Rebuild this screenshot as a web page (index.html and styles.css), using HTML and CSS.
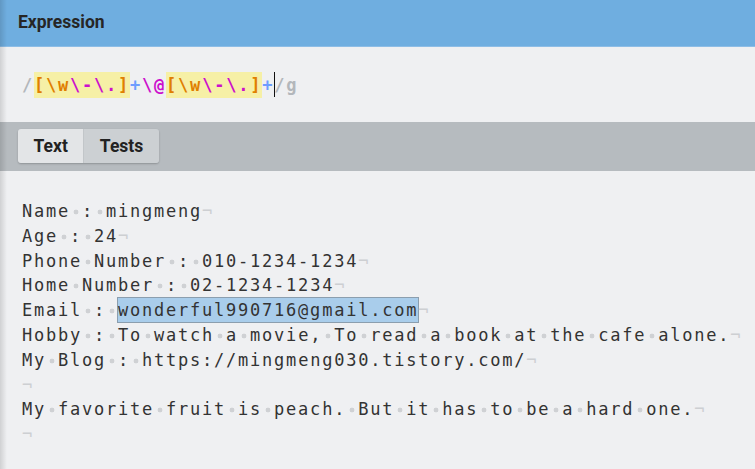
FILE: index.html
```html
<!DOCTYPE html>
<html>
<head>
<meta charset="utf-8">
<link rel="stylesheet" href="styles.css">
</head>
<body>
<div class="app">
  <header class="hdr">Expression</header>
  <section class="expr">
    <div class="rx"><span class="sl">/</span><span class="set"><span class="or">[\w</span><span class="mg">\-\.</span><span class="or">]</span></span><span class="bl">+</span><span class="mg">\@</span><span class="set"><span class="or">[\w</span><span class="mg">\-\.</span><span class="or">]</span></span><span class="bl">+</span><span class="caret"></span><span class="sl">/g</span></div>
  </section>
  <nav class="bar">
    <div class="tabs"><span class="tab on">Text</span><span class="tab">Tests</span></div>
  </nav>
  <section class="text">
    <div class="ln">Name<i class="s"></i>:<i class="s"></i>mingmeng</div>
    <div class="ln">Age<i class="s"></i>:<i class="s"></i>24</div>
    <div class="ln">Phone<i class="s"></i>Number<i class="s"></i>:<i class="s"></i>010-1234-1234</div>
    <div class="ln">Home<i class="s"></i>Number<i class="s"></i>:<i class="s"></i>02-1234-1234</div>
    <div class="ln">Email<i class="s"></i>:<i class="s"></i><span class="match">wonderful990716@gmail.com</span></div>
    <div class="ln">Hobby<i class="s"></i>:<i class="s"></i>To<i class="s"></i>watch<i class="s"></i>a<i class="s"></i>movie,<i class="s"></i>To<i class="s"></i>read<i class="s"></i>a<i class="s"></i>book<i class="s"></i>at<i class="s"></i>the<i class="s"></i>cafe<i class="s"></i>alone.</div>
    <div class="ln">My<i class="s"></i>Blog<i class="s"></i>:<i class="s"></i>https://mingmeng030.tistory.com/</div>
    <div class="ln"></div>
    <div class="ln">My<i class="s"></i>favorite<i class="s"></i>fruit<i class="s"></i>is<i class="s"></i>peach.<i class="s"></i>But<i class="s"></i>it<i class="s"></i>has<i class="s"></i>to<i class="s"></i>be<i class="s"></i>a<i class="s"></i>hard<i class="s"></i>one.</div>
    <div class="ln"></div>
  </section>
</div>
</body>
</html>
```
FILE: styles.css
```css
html, body {
  margin: 0;
  padding: 0;
  background: #eff0f2;
}
.app {
  position: relative;
  width: 755px;
  height: 469px;
  overflow: hidden;
  background: #eff0f2;
}
.app::after {
  content: "";
  position: absolute;
  left: 0;
  top: 0;
  bottom: 0;
  width: 7px;
  background: linear-gradient(to right, rgba(0,0,0,0.13), rgba(0,0,0,0));
  pointer-events: none;
}
.hdr {
  height: 46px;
  line-height: 45px;
  padding-left: 18px;
  background: #6faee0;
  color: #262626;
  font-family: Roboto, "Liberation Sans", sans-serif;
  font-weight: 700;
  font-size: 17.5px;
  border-bottom: 1px solid #8dbde6;
}
.expr {
  height: 75px;
  box-sizing: border-box;
  padding: 25px 0 0 22px;
}
.rx {
  font-family: "DejaVu Sans Mono", monospace;
  font-weight: 700;
  font-size: 17px;
  letter-spacing: 1.77px;
  line-height: 25px;
  white-space: pre;
}
.sl { color: #b3b7bb; }
.or { color: #e07f00; }
.mg { color: #cc10cc; }
.bl { color: #6e9dff; }
.set {
  background: #f6f0a6;
  padding: 2.6px 0;
}
.caret {
  display: inline-block;
  width: 0;
  height: 25px;
  border-left: 1px solid #111;
  margin-right: -1px;
  vertical-align: -6px;
}
.bar {
  height: 49px;
  box-sizing: border-box;
  background: #b6bbbf;
  padding: 7px 18px 0;
}
.tabs {
  display: inline-flex;
  border-radius: 3px;
  box-shadow: 0 1px 2px rgba(0,0,0,0.22);
  overflow: hidden;
}
.tab {
  height: 34px;
  line-height: 35px;
  padding: 0 15.5px;
  background: #ccd0d3;
  color: #222;
  font-family: Roboto, "Liberation Sans", sans-serif;
  font-weight: 700;
  font-size: 17.5px;
}
.tab.on {
  background: #e3e5e7;
  border-right: 1px solid #c2c6c9;
}
.text {
  padding: 28px 0 0 22px;
  font-family: "DejaVu Sans Mono", monospace;
  font-size: 17px;
  letter-spacing: 1.77px;
  line-height: 24.8px;
  color: #333;
}
.ln {
  height: 24.8px;
  white-space: pre;
}
.ln::after {
  content: "\00ac";
  color: #cdcfd2;
  letter-spacing: 0;
}
.s {
  display: inline-block;
  width: 12px;
  height: 10px;
  background: radial-gradient(circle at 50% 50%, #cfd1d4 2.1px, rgba(207,209,212,0) 2.7px);
}
.match {
  background: #a9cdeb;
  box-shadow: 0 0 0 1px #8b9eae;
  padding: 2px 0;
}
```
